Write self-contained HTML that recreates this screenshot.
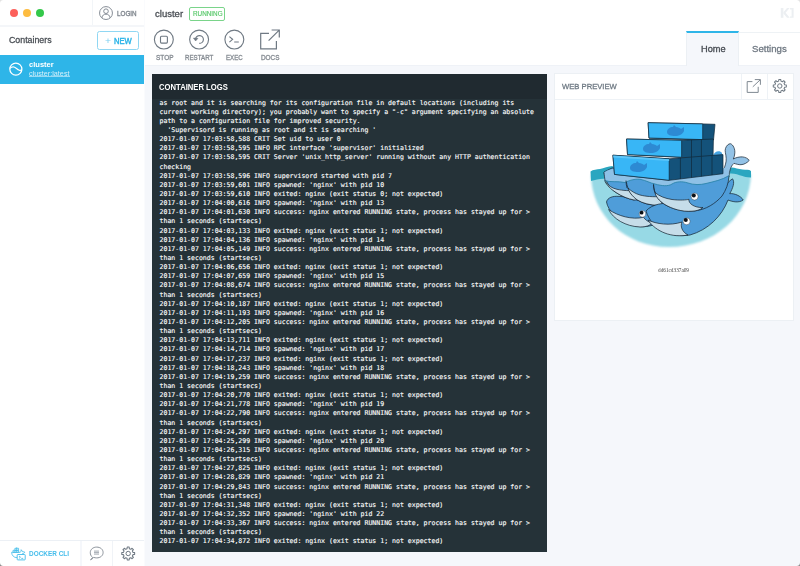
<!DOCTYPE html>
<html><head><meta charset="utf-8">
<style>
*{box-sizing:border-box;margin:0;padding:0}
html,body{width:800px;height:566px;overflow:hidden;background:#fff;font-family:"Liberation Sans",sans-serif;color:#556473}
.abs{position:absolute}
.t{position:absolute;white-space:nowrap;line-height:1;transform-origin:0 0}
#content{left:145px;top:65px;width:655px;height:501px;background:#F5F7FB}
#logs{left:152px;top:74px;width:394.5px;height:477.5px;background:#253238}
#logs .hd{position:absolute;left:0;top:0;width:394.5px;height:25.3px;background:#202A30}
#logtxt{position:absolute;left:7.5px;top:24.6px;width:385px;font-family:"DejaVu Sans Mono","Liberation Mono",monospace;font-size:6.556px;line-height:9.142px;color:#fff;white-space:pre;-webkit-text-stroke:0.12px #fff}
#web{left:554px;top:73px;width:240px;height:248px;background:#fff;border:1px solid #ECF0F4}
.ln{position:absolute;background:#ECF0F5}
</style></head><body>
<div id="content" class="abs"></div>
<div class="ln" style="left:145px;top:65px;width:655px;height:1px;background:#EFF2F7"></div>
<!-- sidebar -->
<div class="ln" style="left:144px;top:0;width:1px;height:566px;background:#FAFBFD"></div>
<div class="ln" style="left:0;top:25px;width:144px;height:2px;background:#F4F6F9"></div>
<div class="ln" style="left:92px;top:0;width:1px;height:25px;background:#F2F5F8"></div>
<div class="abs" style="left:97.2px;top:31.2px;width:41.8px;height:19.3px;border:1px solid #90D7F3;border-radius:2.5px"></div>
<div class="abs" style="left:0;top:55px;width:144px;height:28.9px;background:#2EB5E8"></div>
<div class="abs" style="left:29px;top:76.4px;width:40.5px;height:1px;background:rgba(255,255,255,0.5)"></div>
<div class="ln" style="left:0;top:540px;width:144px;height:1px"></div>
<div class="ln" style="left:80px;top:541px;width:2px;height:25px;background:#F5F7FB"></div>
<div class="ln" style="left:112px;top:541px;width:1px;height:25px;background:#F0F3F7"></div>
<!-- header -->
<div class="abs" style="left:189px;top:7px;width:36.4px;height:13.5px;border:1px solid #7AD48A;border-radius:2px"></div>
<!-- tabs -->
<div class="ln" style="left:686.5px;top:31.5px;width:113.5px;height:1px;background:#EEF2F5"></div>
<div class="abs" style="left:686.4px;top:30.5px;width:52.6px;height:35.5px;background:#F5F7FB;border-top:2px solid #2EB5E8;border-right:1px solid #ECF0F4;border-left:1px solid #ECF0F4"></div>
<!-- logs -->
<div id="logs" class="abs"><div class="hd"></div>
<div id="logtxt">as root and it is searching for its configuration file in default locations (including its
current working directory); you probably want to specify a "-c" argument specifying an absolute
path to a configuration file for improved security.
  'Supervisord is running as root and it is searching '
2017-01-07 17:03:58,588 CRIT Set uid to user 0
2017-01-07 17:03:58,595 INFO RPC interface 'supervisor' initialized
2017-01-07 17:03:58,595 CRIT Server 'unix_http_server' running without any HTTP authentication
checking
2017-01-07 17:03:58,596 INFO supervisord started with pid 7
2017-01-07 17:03:59,601 INFO spawned: 'nginx' with pid 10
2017-01-07 17:03:59,610 INFO exited: nginx (exit status 0; not expected)
2017-01-07 17:04:00,616 INFO spawned: 'nginx' with pid 13
2017-01-07 17:04:01,630 INFO success: nginx entered RUNNING state, process has stayed up for &gt;
than 1 seconds (startsecs)
2017-01-07 17:04:03,133 INFO exited: nginx (exit status 1; not expected)
2017-01-07 17:04:04,136 INFO spawned: 'nginx' with pid 14
2017-01-07 17:04:05,149 INFO success: nginx entered RUNNING state, process has stayed up for &gt;
than 1 seconds (startsecs)
2017-01-07 17:04:06,656 INFO exited: nginx (exit status 1; not expected)
2017-01-07 17:04:07,659 INFO spawned: 'nginx' with pid 15
2017-01-07 17:04:08,674 INFO success: nginx entered RUNNING state, process has stayed up for &gt;
than 1 seconds (startsecs)
2017-01-07 17:04:10,187 INFO exited: nginx (exit status 1; not expected)
2017-01-07 17:04:11,193 INFO spawned: 'nginx' with pid 16
2017-01-07 17:04:12,205 INFO success: nginx entered RUNNING state, process has stayed up for &gt;
than 1 seconds (startsecs)
2017-01-07 17:04:13,711 INFO exited: nginx (exit status 1; not expected)
2017-01-07 17:04:14,714 INFO spawned: 'nginx' with pid 17
2017-01-07 17:04:17,237 INFO exited: nginx (exit status 1; not expected)
2017-01-07 17:04:18,243 INFO spawned: 'nginx' with pid 18
2017-01-07 17:04:19,259 INFO success: nginx entered RUNNING state, process has stayed up for &gt;
than 1 seconds (startsecs)
2017-01-07 17:04:20,770 INFO exited: nginx (exit status 1; not expected)
2017-01-07 17:04:21,778 INFO spawned: 'nginx' with pid 19
2017-01-07 17:04:22,790 INFO success: nginx entered RUNNING state, process has stayed up for &gt;
than 1 seconds (startsecs)
2017-01-07 17:04:24,297 INFO exited: nginx (exit status 1; not expected)
2017-01-07 17:04:25,299 INFO spawned: 'nginx' with pid 20
2017-01-07 17:04:26,315 INFO success: nginx entered RUNNING state, process has stayed up for &gt;
than 1 seconds (startsecs)
2017-01-07 17:04:27,825 INFO exited: nginx (exit status 1; not expected)
2017-01-07 17:04:28,829 INFO spawned: 'nginx' with pid 21
2017-01-07 17:04:29,843 INFO success: nginx entered RUNNING state, process has stayed up for &gt;
than 1 seconds (startsecs)
2017-01-07 17:04:31,348 INFO exited: nginx (exit status 1; not expected)
2017-01-07 17:04:32,352 INFO spawned: 'nginx' with pid 22
2017-01-07 17:04:33,367 INFO success: nginx entered RUNNING state, process has stayed up for &gt;
than 1 seconds (startsecs)
2017-01-07 17:04:34,872 INFO exited: nginx (exit status 1; not expected)</div>
</div>
<!-- web preview -->
<div id="web" class="abs"></div>
<div class="ln" style="left:555px;top:99px;width:238px;height:1px;background:#EEF2F6"></div>
<div class="ln" style="left:740.5px;top:74px;width:1px;height:25px;background:#EEF2F6"></div>
<div class="ln" style="left:767px;top:74px;width:1px;height:25px;background:#EEF2F6"></div>

<svg class="abs" style="left:0;top:0" width="800" height="566" viewBox="0 0 800 566">
<!-- traffic lights -->
<circle cx="14" cy="13" r="4" fill="#FC605B"/><circle cx="27" cy="13" r="4" fill="#FDBC40"/><circle cx="40" cy="13" r="4" fill="#34C84A"/>
<!-- login -->
<g fill="none" stroke="#7F8790" stroke-width="0.95"><circle cx="106" cy="13.05" r="6.45"/><circle cx="106" cy="11.2" r="2.3"/><path d="M101.9 17.9c0.5-2.7 1.8-3.7 4.1-3.7s3.6 1 4.1 3.7"/></g>
<!-- container icon -->
<g fill="none" stroke="#fff" stroke-width="1.25"><circle cx="15.85" cy="69.1" r="6.05"/><path d="M10,68.4C11.2,67.2 12.6,66.6 14,67C15.8,67.5 17.2,69.6 19.2,70.2C20.2,70.5 21.2,70.3 22,69.8" stroke-width="1.1"/></g>
<!-- action icons -->
<g fill="none" stroke="#6F7983" stroke-width="1.12">
<circle cx="163.85" cy="39.55" r="9.45"/><rect x="160.5" y="36.2" width="6.9" height="6.9" rx="1"/>
<circle cx="199.1" cy="39.55" r="9.45"/>
<path d="M195.6,39.2 A3.9,3.9 0 1 1 199.3,43.4" stroke-width="1.15"/>
<path d="M193.4,38.1 L195.6,41 L198,38.3 Z" fill="#6F7983" stroke-width="0.5" stroke-linejoin="round"/>
<circle cx="234.35" cy="39.55" r="9.45"/>
<path d="M229.4,36.6 L232.6,39.35 L229.4,42.1 M234.2,42 L238.8,42" stroke-width="1.15"/>
<path d="M269,33.4 L260.7,33.4 L260.7,48.9 L276.4,48.9 L276.4,40.9 M268.6,40.6 L279.2,30.1 M271.6,30 L279.3,30 L279.3,37.4" stroke-width="1.2"/>
<!-- web preview icons -->
<path d="M752.4,81.6 L747.2,81.6 L747.2,92.4 L758.2,92.4 L758.2,86.8 M752.8,86.8 L760.2,79.8 M754.8,79.6 L760.4,79.6 L760.4,84.8" stroke-width="0.95" stroke="#78828B"/>
<path d="M784.66,84.83 L786.33,85.02 L786.33,86.98 L784.66,87.17 L784.06,88.61 L785.11,89.92 L783.72,91.31 L782.41,90.26 L780.97,90.86 L780.78,92.53 L778.82,92.53 L778.63,90.86 L777.19,90.26 L775.88,91.31 L774.49,89.92 L775.54,88.61 L774.94,87.17 L773.27,86.98 L773.27,85.02 L774.94,84.83 L775.54,83.39 L774.49,82.08 L775.88,80.69 L777.19,81.74 L778.63,81.14 L778.82,79.47 L780.78,79.47 L780.97,81.14 L782.41,81.74 L783.72,80.69 L785.11,82.08 L784.06,83.39Z" stroke-width="1.05" stroke-linejoin="round"/><circle cx="779.8" cy="86" r="2.2" stroke-width="1"/>
<!-- bottom icons -->
<path d="M132.96,552.36 L134.63,552.53 L134.63,554.47 L132.96,554.64 L132.38,556.06 L133.43,557.36 L132.06,558.73 L130.76,557.68 L129.34,558.26 L129.17,559.93 L127.23,559.93 L127.06,558.26 L125.64,557.68 L124.34,558.73 L122.97,557.36 L124.02,556.06 L123.44,554.64 L121.77,554.47 L121.77,552.53 L123.44,552.36 L124.02,550.94 L122.97,549.64 L124.34,548.27 L125.64,549.32 L127.06,548.74 L127.23,547.07 L129.17,547.07 L129.34,548.74 L130.76,549.32 L132.06,548.27 L133.43,549.64 L132.38,550.94Z" stroke-width="1.05" stroke-linejoin="round"/><circle cx="128.2" cy="553.5" r="2.2" stroke-width="1"/>
<path d="M92.6,557.4 C90.9,556.2 90.3,554.4 90.3,552.5 C90.3,549.3 93.2,547.1 96.7,547.1 C100.3,547.1 103.1,549.3 103.1,552.5 C103.1,555.7 100.3,557.9 96.7,557.9 C95.6,557.9 94.6,557.7 93.7,557.4 C92.8,558.6 91.6,559.4 90.5,559.7 C91.5,558.9 92.3,558.2 92.6,557.4 Z" stroke="#7F8790" stroke-width="0.9" stroke-linejoin="round"/>
</g>
<g stroke="#8E969E" stroke-width="0.8"><path d="M94,551.1H99 M94,552.6H99 M94,554.1H99"/></g>
<!-- docker cli icon -->
<g fill="none" stroke="#3DBBEA" stroke-width="0.8" stroke-linejoin="round">
<path d="M11.6,552.3 L20.3,552.3 C21,551.6 21.2,550.6 20.9,549.8 C21.9,550.2 22.6,551 22.8,551.9 C23.5,551.7 24.3,551.8 24.8,552.2 C24.4,553.2 23.4,553.7 22.4,553.7 L22,554.3 M17,557.6 C14,557.8 11.8,555.6 11.6,552.3"/>
<path d="M13,550.3h5.6v2h-5.6z M14.9,548.3h3.7v2h-3.7z M16.7,547.4v4.9 M14.9,550.3v2"/>
<rect x="17.2" y="554.5" width="8" height="5.4" rx="0.6" stroke-width="0.9"/>
<path d="M19,556 L20.5,557.2 L19,558.4 M21.3,558.4 H23.2"/>
</g>
<!-- K logo -->
<g fill="#ECEFF2"><rect x="780.8" y="8" width="2.6" height="9.8"/><path d="M783.4,12.2 L787,8 L789.6,8 L785.6,12.8 L789.8,17.8 L787,17.8 L783.4,13.6 Z"/><path d="M790,8 L793.6,8 L793.6,17.8 L790,17.8 L790,16.4 L791.6,16.4 L791.6,9.4 L790,9.4 Z"/></g>
<!-- window corners -->
<path d="M0,0H3.6A3.6,3.6 0 0 0 0,3.6Z" fill="#E2E2E2"/>
<path d="M800,0H796.4A3.6,3.6 0 0 1 800,3.6Z" fill="#E2E2E2"/>
<path d="M0,566H3.4A3.4,3.4 0 0 1 0,562.6Z" fill="#8E8E8E"/>
<path d="M800,566H796.6A3.4,3.4 0 0 0 800,562.6Z" fill="#8E8E8E"/>
</svg>

<svg class="abs" style="left:580px;top:110px" width="180" height="145" viewBox="580 110 180 145">
<defs><filter id="bl" x="-5%" y="-5%" width="110%" height="110%"><feGaussianBlur stdDeviation="0.8"/></filter></defs>
<!-- water bowl -->
<path filter="url(#bl)" d="M591,175 C591.5,215 625,247 669,247 C714,247 750,216 751,174 L731,170 L612,168 Z" fill="#97D9E5"/>
<!-- teal back waves -->
<path d="M590.5,171.5 C593,169.5 597,169.5 600,169 C604,168.3 608,166 612.6,165.9 L616,176 L606,179 C601,178 596,180 591,181 Z" fill="#2AA6C0"/>
<path d="M730.5,167.5 C734,167 738,169 742.5,169.6 C746,170 749,169.5 751,171 L751,177.4 C747,177.5 744,176.5 742.5,176 C738,174.5 734,173 729.5,173.5 Z" fill="#2AA6C0"/>
<g stroke="#14212E" stroke-width="0.7" stroke-linejoin="round">
<!-- big tail -->
<path d="M723.3,171 C725,166 726.5,162 726.2,158.3 C726,154 724.5,151 725.5,148.4 C726.5,145.5 728.5,143.7 730.4,143.7 C733,144.5 735.5,149 734.7,154 C734.5,156 734,157.5 733.3,159 C736,157.5 739.5,156.7 742.5,156.9 C745.5,157.2 748,158.5 749.2,160.4 C747,163 744,164.5 741,164.7 C738.5,164.8 736,164 734,163.3 C732,165 731,167 730.4,168.9 C729.5,171.5 729,174 729,176.7 L723.3,176 Z" fill="#93C2E6"/>
<!-- lower-left whale -->
<path d="M606.5,202 C607.5,197.5 613,195.8 619,196.4 C630,197 644,199 656,206 L656,224 C648,227.5 638,227.5 630,224.5 C618,220 608,211 606.5,202 Z" fill="#4F9DD9"/>
<path d="M608.6,209.5 C613,219 626,226.5 640,227 C646,227 650,225.5 652,223 C648,222 645,219.5 643.5,217.3 C632,220 618,216 608.6,209.5 Z" fill="#C6DDE9"/>
<!-- upper row whales: left -->
<path d="M604,172 C605,180 609,188 616,192.5 C622,196.5 628,198.8 634,200 L648,192 L648,176 L640,168 L612,168 Z" fill="#4F9DD9"/>
<path d="M605.2,181.5 C608,185.5 612,188.2 617,189.3 C623,190.6 629,191 638,190.5 L638,200 L634,200 C628,198.8 622,196.5 616,192.5 C610.5,189 606.5,185 605.2,181.5 Z" fill="#C6DDE9"/>
<!-- upper row whales: middle -->
<path d="M626,178 C626.5,188 630,194 637,199.8 C643,203.5 650,205 658,205.5 L672,196 L672,176 L650,170 Z" fill="#4F9DD9"/>
<path d="M628,188 C631,191 635,193.5 640,195 C646,196.5 652,197 662,196.5 L662,205.5 L658,205.5 C650,205 643,203.5 637,199.8 C632,196 629,192 628,188 Z" fill="#C6DDE9"/>
<!-- lower-right whale -->
<path d="M646,211 C652,204 664,202 676,204 L724,186 C727,184 729,181 732.5,178.8 C735,182 733,188 729.7,193.7 C734,193 741,196 743.2,200 C739,203 733,202 728,200 C722,216 708,230 690,235 C672,238 652,230 646,211 Z" fill="#4F9DD9"/>
<path d="M648,220 C656,232 672,238 688,235 C682,232 680,226 682,222 C670,226 656,224 648,220 Z" fill="#C6DDE9"/>
<!-- upper-right whale -->
<path d="M653.5,184 C654,194 658,200 664,204 C672,209 684,212 694,211 C706,210 716,203 722,196 C726,190 728.5,184 729,176 L723,170 L664,172 Z" fill="#4F9DD9"/>
<path d="M655,192.5 C659,196 665,198.5 672,199.5 C680,200.5 686,200 689,199.3 C688,203 694,208 703,207.5 C700,210 696,211 692,211.2 C682,212 672,209 664,204 C659,200.5 656,197 655,192.5 Z" fill="#C6DDE9"/>
</g>
<!-- light back of whales above water -->
<path d="M604.5,180.5 C610,182.5 618,181 625,182.5 C630,180 636,178.5 641,179.5 C646,180.5 650,183 655,184 C662,186 668,186.5 672,184 C676,181.5 682,181 688,183 C694,185 700,185 706,183.5 C714,181.5 722,180 729,175.6 L727,168 L620,168 C614,168 608,169.5 604,172.5 Z" fill="#8FC1E6"/>
<path d="M604.5,180.5 C610,182.5 618,181 625,182.5 C630,180 636,178.5 641,179.5 C646,180.5 650,183 655,184 C662,186 668,186.5 672,184 C676,181.5 682,181 688,183 C694,185 700,185 706,183.5 C714,181.5 722,180 729,175.6" fill="none" stroke="#2580A5" stroke-width="0.8"/>
<path d="M604,172.5 C604.3,175.5 604.6,178 605.2,181.5 M626,180.5 C626,183 626.3,185.5 627,188 M653.5,185 C653.6,187.5 654,190 655,192.5" fill="none" stroke="#14212E" stroke-width="0.7"/>
<path d="M713,156 C714,151 720,150 722,153 L723,172 L713,172 Z" fill="#47A4E2"/>
<!-- eyes -->
<g stroke="#14212E" stroke-width="0.4"><circle cx="694.6" cy="196.6" r="3.5" fill="#fff"/><circle cx="686.6" cy="221.3" r="3.5" fill="#fff"/><circle cx="642.5" cy="213.9" r="3.3" fill="#fff"/></g>
<g fill="#0B0F14"><circle cx="693.8" cy="195.4" r="2"/><circle cx="685.8" cy="220.1" r="2"/><circle cx="641.6" cy="212.7" r="1.9"/></g>
<!-- containers -->
<g stroke="#10283A" stroke-width="0.7" stroke-linejoin="round">
<path d="M648.1,122.7 L702.7,123.9 L715,124.3 L713.5,140 L702.7,140 L649,138.2 Z" fill="#14527A"/>
<path d="M648.1,122.7 L702.7,123.9 L702.7,139.6 L649,138 Z" fill="#38B6F6"/>
<path d="M626.5,139 L681.6,140.3 L713.4,139 L713,158 L681.6,157.5 L627.5,154.6 Z" fill="#14527A"/>
<path d="M626.5,139 L681.6,140.3 L681.6,157.2 L627.5,154.6 Z" fill="#38B6F6"/>
<path d="M691.5,140 L691.5,157.5 M701.4,139.6 L701.4,157.5" fill="none"/>
<path d="M612.9,155.2 L669.2,158.8 L723,154.6 L723,173.7 L669.2,180.3 L614.5,174.4 Z" fill="#14527A"/>
<path d="M612.9,155.2 L669.2,158.8 L669.2,180.3 L614.5,174.4 Z" fill="#38B6F6"/>
<path d="M613.2,155.6 L669.2,159.2 L669.2,161 L613.4,157.4 Z" fill="#5CC6FA" stroke="none"/>
<path d="M680.4,158 L680.4,179 M691.5,157.2 L691.5,177.6 M701.4,156.4 L701.4,176.4 M712,155.6 L712,175.1" fill="none"/>
</g>
<!-- whale logos on containers -->
<g fill="#2A80CB" fill-opacity="0.8">
<path d="M667,132 c0,-3 3,-5 6,-5 l1,-2 l2,2 c2,0 4,1 5,2 l3,-2 l0,4 c-1,3 -5,5 -9,5 c-4,0 -8,-1 -8,-4 z"/>
<path d="M643,149 c0,-3 3,-5 6,-5 l1,-2 l2,2 c2,0 4,1 5,2 l3,-2 l0,4 c-1,3 -5,5 -9,5 c-4,0 -8,-1 -8,-4 z"/>
<path d="M630,168 c0,-3 3,-5 6,-5 l1,-2 l2,2 c2,0 4,1 5,2 l3,-2 l0,4 c-1,3 -5,5 -9,5 c-4,0 -8,-1 -8,-4 z"/>
</g>
</svg>

<div class="t" style="left:117.4px;top:11.04px;font-size:6.8px;color:#7b828a;transform:scaleX(0.9264);-webkit-text-stroke:0.3px #7b828a;">LOGIN</div>
<div class="t" style="left:9.4px;top:36.31px;font-size:9.2px;color:#4a4f55;transform:scaleX(0.9586);-webkit-text-stroke:0.3px #4a4f55;">Containers</div>
<div class="t" style="left:105.2px;top:37.18px;font-size:9px;color:#7fd0f2;transform:scaleX(1.1395);">+</div>
<div class="t" style="left:113.9px;top:37.61px;font-size:8.2px;color:#2eb5e8;transform:scaleX(0.9262);-webkit-text-stroke:0.45px #2eb5e8;">NEW</div>
<div class="t" style="left:29px;top:60.77px;font-size:7.6px;color:#ffffff;font-weight:bold;transform:scaleX(0.9917);">cluster</div>
<div class="t" style="left:29px;top:70.60px;font-size:6.5px;color:#d6f0fa;transform:scaleX(1.1096);">cluster:latest</div>
<div class="t" style="left:29.3px;top:550.64px;font-size:6.8px;color:#45bdeb;font-weight:bold;transform:scaleX(0.9457);">DOCKER CLI</div>
<div class="t" style="left:154.6px;top:8.61px;font-size:9.5px;color:#4a4f55;transform:scaleX(1.0041);-webkit-text-stroke:0.3px #4a4f55;">cluster</div>
<div class="t" style="left:192.7px;top:10.77px;font-size:6.3px;color:#56c768;transform:scaleX(1.0071);-webkit-text-stroke:0.15px #56c768;">RUNNING</div>
<div class="t" style="left:155.7px;top:55.24px;font-size:6.8px;color:#858b92;transform:scaleX(0.9516);-webkit-text-stroke:0.3px #858b92;">STOP</div>
<div class="t" style="left:185.1px;top:55.24px;font-size:6.8px;color:#858b92;transform:scaleX(0.9102);-webkit-text-stroke:0.3px #858b92;">RESTART</div>
<div class="t" style="left:226.4px;top:55.24px;font-size:6.8px;color:#858b92;transform:scaleX(0.9019);-webkit-text-stroke:0.3px #858b92;">EXEC</div>
<div class="t" style="left:261px;top:55.24px;font-size:6.8px;color:#858b92;transform:scaleX(0.9419);-webkit-text-stroke:0.3px #858b92;">DOCS</div>
<div class="t" style="left:701px;top:45.41px;font-size:9.2px;color:#454a51;transform:scaleX(1.0034);-webkit-text-stroke:0.3px #454a51;">Home</div>
<div class="t" style="left:752.3px;top:45.41px;font-size:9.2px;color:#707983;transform:scaleX(1.0451);-webkit-text-stroke:0.3px #707983;">Settings</div>
<div class="t" style="left:158.9px;top:83.66px;font-size:8.2px;color:#ffffff;font-weight:bold;transform:scaleX(0.9355);">CONTAINER LOGS</div>
<div class="t" style="left:561.6px;top:82.75px;font-size:7.8px;color:#6f7a84;transform:scaleX(0.9805);-webkit-text-stroke:0.3px #6f7a84;">WEB PREVIEW</div>
<div class="t" style="left:657.8px;top:267.76px;font-size:5.25px;color:#444;transform:scaleX(1.0025);font-family:'Liberation Serif',serif">dd61cd337a09</div>
</body></html>
